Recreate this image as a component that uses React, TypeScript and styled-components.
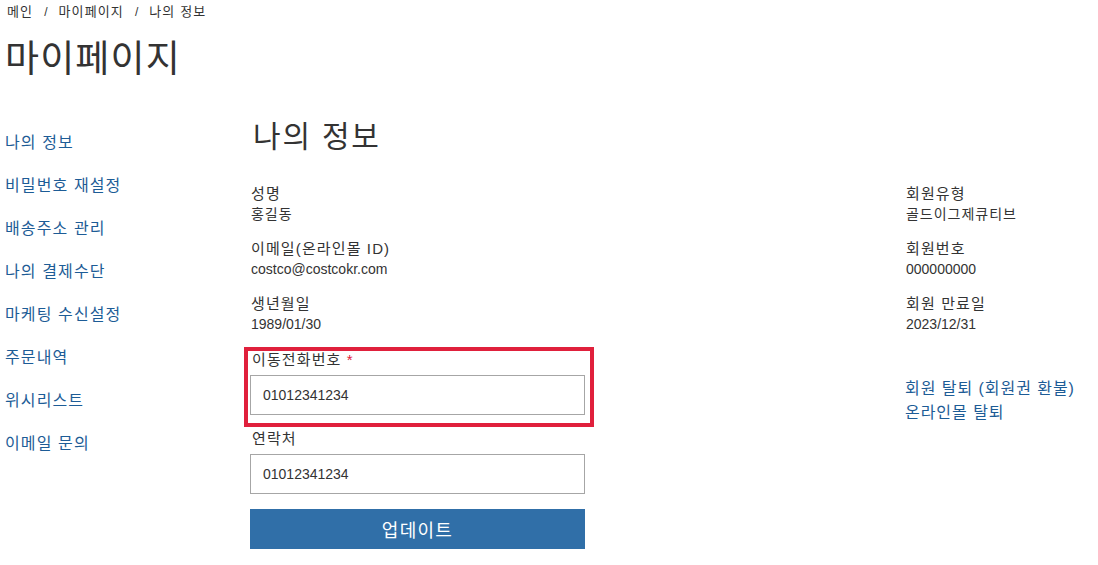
import React from 'react';
import styled, { createGlobalStyle } from 'styled-components';

const GlobalStyle = createGlobalStyle`
  body {
    margin: 0;
    background: #fff;
    color: #333;
    font-family: 'Liberation Sans', 'Noto Sans CJK KR', sans-serif;
    letter-spacing: 0.07em;
  }
`;

const navItems = [
  '나의 정보',
  '비밀번호 재설정',
  '배송주소 관리',
  '나의 결제수단',
  '마케팅 수신설정',
  '주문내역',
  '위시리스트',
  '이메일 문의',
];

const leftInfo = [
  { label: '성명', value: '홍길동' },
  { label: '이메일(온라인몰 ID)', value: 'costco@costcokr.com' },
  { label: '생년월일', value: '1989/01/30' },
];

const rightInfo = [
  { label: '회원유형', value: '골드이그제큐티브' },
  { label: '회원번호', value: '000000000' },
  { label: '회원 만료일', value: '2023/12/31' },
];

const isHangul = (text: string) => /[가-힣]/.test(text);

const App = () => {
  return (
    <>
      <GlobalStyle />
      <Page>
        <Breadcrumb>
          <Crumb>메인</Crumb>
          <Separator>/</Separator>
          <Crumb>마이페이지</Crumb>
          <Separator>/</Separator>
          <Crumb>나의 정보</Crumb>
        </Breadcrumb>
        <PageTitle>마이페이지</PageTitle>
        <Layout>
          <SideNav>
            {navItems.map((item) => (
              <NavLink key={item} href='#'>
                {item}
              </NavLink>
            ))}
          </SideNav>
          <Main>
            <SectionTitle>나의 정보</SectionTitle>
            <InfoList>
              {leftInfo.map((info) => (
                <InfoItem key={info.label}>
                  <InfoLabel>{info.label}</InfoLabel>
                  <InfoValue $hangul={isHangul(info.value)}>{info.value}</InfoValue>
                </InfoItem>
              ))}
            </InfoList>
            <Form>
              <Field $highlighted>
                <FieldLabel htmlFor='mobile'>
                  이동전화번호 <Required>*</Required>
                </FieldLabel>
                <TextInput id='mobile' type='text' defaultValue='01012341234' />
              </Field>
              <Field>
                <FieldLabel htmlFor='contact'>연락처</FieldLabel>
                <TextInput id='contact' type='text' defaultValue='01012341234' />
              </Field>
              <UpdateButton type='button'>업데이트</UpdateButton>
            </Form>
          </Main>
          <Aside>
            <InfoList>
              {rightInfo.map((info) => (
                <InfoItem key={info.label}>
                  <InfoLabel>{info.label}</InfoLabel>
                  <InfoValue $hangul={isHangul(info.value)}>{info.value}</InfoValue>
                </InfoItem>
              ))}
            </InfoList>
            <AccountLinks>
              <AccountLink href='#'>회원 탈퇴 (회원권 환불)</AccountLink>
              <AccountLink href='#'>온라인몰 탈퇴</AccountLink>
            </AccountLinks>
          </Aside>
        </Layout>
      </Page>
    </>
  );
};

export default App;

const Page = styled.div`
  padding: 2px 5px 0;
`;

const Breadcrumb = styled.nav`
  display: flex;
  align-items: center;
  padding-left: 2px;
  font-size: 13px;
  line-height: 20px;
  color: #333;
`;

const Crumb = styled.span``;

const Separator = styled.span`
  padding: 0 11px;
  font-size: 12px;
  letter-spacing: 0;
`;

const PageTitle = styled.h1`
  margin: 15px 0 0;
  font-size: 37px;
  font-weight: 400;
  line-height: 46px;
  color: #333;
`;

const Layout = styled.div`
  display: grid;
  grid-template-columns: 245px 655px 1fr;
  margin-top: 36px;
`;

const SideNav = styled.nav`
  display: flex;
  flex-direction: column;
  gap: 23px;
  padding-top: 14px;
`;

const NavLink = styled.a`
  font-size: 16px;
  line-height: 20px;
  color: #1d5c96;
  text-decoration: none;
`;

const Main = styled.main`
  display: flex;
  flex-direction: column;
`;

const SectionTitle = styled.h2`
  margin: 0 0 29px 3px;
  font-size: 30px;
  font-weight: 400;
  line-height: 36px;
  letter-spacing: 0.06em;
  color: #333;
`;

const InfoList = styled.div`
  display: flex;
  flex-direction: column;
  gap: 15px;
`;

const InfoItem = styled.div`
  display: flex;
  flex-direction: column;
  padding-left: 1px;
`;

const InfoLabel = styled.span`
  font-size: 15px;
  line-height: 20px;
  color: #333;
`;

const InfoValue = styled.span<{ $hangul?: boolean }>`
  font-size: 14px;
  line-height: 20px;
  letter-spacing: ${({ $hangul }) => ($hangul ? '0.07em' : '0')};
  color: #333;
`;

const Form = styled.form`
  display: flex;
  flex-direction: column;
  width: 335px;
  margin-top: 16px;
`;

const Field = styled.div<{ $highlighted?: boolean }>`
  position: relative;
  display: flex;
  flex-direction: column;
  gap: 5px;
  margin-bottom: ${({ $highlighted }) => ($highlighted ? '14px' : '15px')};

  &::after {
    content: '';
    display: ${({ $highlighted }) => ($highlighted ? 'block' : 'none')};
    position: absolute;
    top: -3px;
    left: -6px;
    right: -9px;
    bottom: -12px;
    border: 4px solid #e0203c;
    pointer-events: none;
  }
`;

const FieldLabel = styled.label`
  padding-left: 2px;
  font-size: 15px;
  line-height: 20px;
  color: #333;
`;

const Required = styled.span`
  color: #e0203c;
`;

const TextInput = styled.input`
  box-sizing: border-box;
  width: 100%;
  height: 40px;
  padding: 0 12px;
  border: 1px solid #a6a6a6;
  border-radius: 0;
  font-family: 'Liberation Sans', sans-serif;
  font-size: 14px;
  letter-spacing: 0;
  color: #333;
  background: #fff;
  outline: none;
`;

const UpdateButton = styled.button`
  height: 40px;
  border: none;
  background: #306fa8;
  color: #fff;
  font-family: 'Liberation Sans', 'Noto Sans CJK KR', sans-serif;
  font-size: 18px;
  letter-spacing: 0.07em;
  cursor: pointer;
`;

const Aside = styled.aside`
  display: flex;
  flex-direction: column;
  padding-top: 65px;
`;

const AccountLinks = styled.div`
  display: flex;
  flex-direction: column;
  margin-top: 43px;
`;

const AccountLink = styled.a`
  font-size: 16px;
  line-height: 24px;
  letter-spacing: 0.06em;
  color: #1d5c96;
  text-decoration: none;
`;
